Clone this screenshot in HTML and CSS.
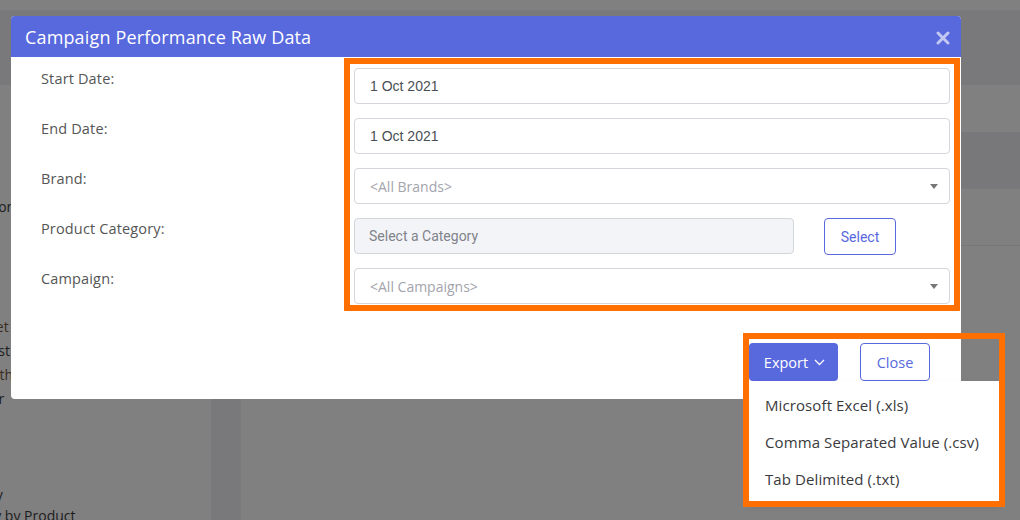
FILE: index.html
```html
<!DOCTYPE html>
<html lang="en">
<head>
<meta charset="utf-8">
<title>Campaign Performance Raw Data</title>
<link rel="stylesheet" href="styles.css">
</head>
<body>
<div class="page">
  <div class="topstrip"></div>
  <div class="topband"></div>
  <div class="layout">
    <aside class="sidebar">
      <ul class="nav">
        <li class="nav-item first"><span class="i60">Competitor</span></li>
        <li class="nav-item group"><span class="i37 warm">Budget Sheet</span></li>
        <li class="nav-item"><span class="i19">Cost</span></li>
        <li class="nav-item"><span class="i29 warm">Monthly</span></li>
        <li class="nav-item"><span class="i25">Year</span></li>
        <li class="nav-item tight group2"><span class="i58">Summary</span></li>
        <li class="nav-item tight"><span class="i57">Category by Product</span></li>
      </ul>
    </aside>
    <div class="gutter"></div>
    <main class="content">
      <div class="band band-a"></div>
      <div class="band band-b"></div>
      <div class="band band-c"></div>
      <div class="band band-d"></div>
    </main>
  </div>
</div>

<div class="modal">
  <div class="modal-header">
    <h1 class="modal-title">Campaign Performance Raw Data</h1>
    <span class="modal-x"><svg width="14" height="14" viewBox="0 0 14 14"><path d="M2 2 L12 12 M12 2 L2 12" stroke="#c3c8f2" stroke-width="3" stroke-linecap="round"/></svg></span>
  </div>
  <div class="modal-body">
    <label class="lbl">Start Date:</label>
    <div class="field"><div class="input">1 Oct 2021</div></div>

    <label class="lbl">End Date:</label>
    <div class="field"><div class="input">1 Oct 2021</div></div>

    <label class="lbl">Brand:</label>
    <div class="field"><div class="input select"><span class="ph">&lt;All Brands&gt;</span><span class="caret"></span></div></div>

    <label class="lbl">Product Category:</label>
    <div class="field cat">
      <div class="input disabled">Select a Category</div>
      <button class="btn-outline small">Select</button>
    </div>

    <label class="lbl">Campaign:</label>
    <div class="field"><div class="input select"><span class="ph">&lt;All Campaigns&gt;</span><span class="caret"></span></div></div>
  </div>
  <div class="modal-footer">
    <div class="export-wrap">
      <button class="btn-primary">Export <svg width="11" height="7" viewBox="0 0 11 7"><path d="M1 1 L5.5 5.5 L10 1" fill="none" stroke="#fff" stroke-width="1.3"/></svg></button>
      <ul class="menu">
        <li>Microsoft Excel (.xls)</li>
        <li>Comma Separated Value (.csv)</li>
        <li>Tab Delimited (.txt)</li>
      </ul>
    </div>
    <button class="btn-outline">Close</button>
  </div>
</div>

<div class="hl hl-fields"></div>
<div class="hl hl-export"></div>
</body>
</html>
```

FILE: styles.css
```css
* { box-sizing: border-box; }
html, body { margin: 0; padding: 0; }
body {
  width: 1020px;
  height: 520px;
  overflow: hidden;
  position: relative;
  background: #808080;
  font-family: "Open Sans", "Noto Sans", sans-serif;
}

/* dimmed background page */
.page { height: 520px; display: flex; flex-direction: column; }
.topstrip { height: 10px; flex-shrink: 0; background: #808080; }
.topband { height: 75px; flex-shrink: 0; background: #79797b; }
.layout { flex: 1; min-height: 0; overflow: hidden; display: flex; }
.sidebar { width: 211px; background: #808080; overflow: hidden; }
.gutter { width: 30px; background: #79797c; }
.content { flex: 1; display: flex; flex-direction: column; }
.band { flex-shrink: 0; }
.band-a { height: 47px; background: #808080; }
.band-b { height: 56px; background: #78787a; }
.band-c { height: 58px; background: #808080; border-top: 1px solid #7a7a7a; border-bottom: 1px solid #777; }
.band-d { flex: 1; background: #808080; }

.nav { list-style: none; margin: 0; padding: 0; }
.nav-item {
  height: 24px;
  line-height: 24px;
  font-size: 14px;
  color: #1d1d1d;
  white-space: nowrap;
}
.nav-item.first { margin-top: 110px; }
.nav-item.group { margin-top: 96px; }
.nav-item.group2 { margin-top: 73px; }
.nav-item.tight { height: 21px; line-height: 21px; }
.nav-item span { display: inline-block; }
.warm { color: #3b2c1f; }
.i60 { margin-left: -62px; }
.i37 { margin-left: -38px; }
.i19 { margin-left: -19px; }
.i29 { margin-left: -30px; }
.i25 { margin-left: -25px; }
.i58 { margin-left: -60px; }
.i57 { margin-left: -57px; }

/* modal */
.modal {
  position: absolute;
  left: 11px;
  top: 16px;
  width: 950px;
  height: 383px;
  background: #fff;
  border-radius: 4px;
  display: flex;
  flex-direction: column;
}
.modal-header {
  height: 41px;
  background: #5868dd;
  border-radius: 4px 4px 0 0;
  display: flex;
  align-items: center;
  justify-content: space-between;
  padding: 0 11px 0 14px;
}
.modal-title {
  margin: 0;
  color: #fff;
  font-size: 18px;
  font-weight: 500;
  letter-spacing: 0.15px;
}
.modal-x { display: flex; margin-top: 2px; }

.modal-body {
  display: grid;
  grid-template-columns: 313px 1fr;
  grid-auto-rows: 36px;
  row-gap: 14px;
  padding: 11px 11px 0 30px;
}
.lbl {
  font-size: 14.5px;
  letter-spacing: 0.15px;
  line-height: 21px;
  color: #555;
}
.field { display: flex; align-items: center; }
.input {
  flex: 1;
  height: 36px;
  border: 1px solid #d3d6db;
  border-radius: 4px;
  padding: 0 15px;
  display: flex;
  align-items: center;
  font-family: "Liberation Sans", Arial, sans-serif;
  font-size: 14px;
  color: #4a4f55;
}
.input.select { justify-content: space-between; padding-right: 11px; }
.ph {
  font-family: "Open Sans", "Noto Sans", sans-serif;
  color: #a3a4ac;
  font-size: 14px;
}
.caret {
  width: 0; height: 0;
  border-left: 4px solid transparent;
  border-right: 4px solid transparent;
  border-top: 5px solid #777;
}
.input.disabled {
  flex: 0 0 440px;
  background: #f3f4f8;
  color: #80838a;
  font-family: Roboto, "Liberation Sans", sans-serif;
  padding-left: 14px;
}
.field.cat { gap: 30px; align-items: flex-start; }

.btn-outline {
  height: 38px;
  width: 70px;
  border: 1px solid #5868dd;
  border-radius: 4px;
  background: #fff;
  color: #5868dd;
  font-family: "Open Sans", "Noto Sans", sans-serif;
  font-size: 14.5px;
  padding: 0;
  cursor: pointer;
}
.btn-outline.small {
  width: 72px;
  height: 37px;
  font-size: 14px;
  font-family: Roboto, "Liberation Sans", sans-serif;
}

.modal-footer {
  margin-top: auto;
  display: flex;
  justify-content: flex-end;
  gap: 22px;
  padding: 0 31px 18px 0;
}
.export-wrap { position: relative; }
.btn-primary {
  height: 38px;
  width: 89px;
  background: #5868dd;
  border: none;
  border-radius: 4px;
  color: #fff;
  font-family: "Open Sans", "Noto Sans", sans-serif;
  font-size: 14.5px;
  display: flex;
  align-items: center;
  justify-content: center;
  gap: 6px;
  padding: 0 0 0 2px;
}
.btn-primary svg { margin-top: 1px; }
.menu {
  position: absolute;
  left: 0;
  top: 38px;
  width: 250px;
  margin: 0;
  padding: 6px 0 8px;
  list-style: none;
  background: #fff;
  box-shadow: 0 2px 6px rgba(0,0,0,0.06);
}
.menu li {
  height: 37px;
  line-height: 37px;
  padding: 0 16px;
  font-size: 15px;
  letter-spacing: 0.1px;
  color: #3a3a3d;
  white-space: nowrap;
}

/* annotation highlight boxes */
.hl {
  position: absolute;
  border: 6px solid #ff7000;
  pointer-events: none;
}
.hl-fields { left: 344px; top: 58px; width: 616px; height: 253px; }
.hl-export { left: 743px; top: 333px; width: 262px; height: 174px; }
```
